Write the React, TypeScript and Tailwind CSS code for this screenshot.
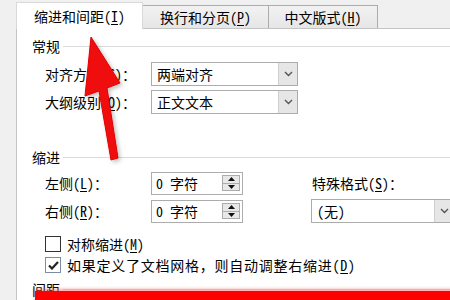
import React from "react";

function Key({ text, k }: { text: string; k: string }) {
	return (
		<span className="whitespace-nowrap">
			{text}(<span className="underline underline-offset-2">{k}</span>)
		</span>
	);
}

function Chevron() {
	return (
		<svg width="9" height="6" viewBox="0 0 9 6">
			<path d="M1 1 L4.5 4.5 L8 1" fill="none" stroke="#555" strokeWidth="1.4" />
		</svg>
	);
}

function Select({ value, className }: { value: string; className: string }) {
	return (
		<div className={"flex items-center h-[24px] border border-[#acacac] bg-white " + className}>
			<span className="flex-1 pl-[5px] leading-none">{value}</span>
			<div className="w-[19px] h-[22px] flex items-center justify-center bg-[#e6e6e6] border-l border-[#cfcfcf] shrink-0">
				<Chevron />
			</div>
		</div>
	);
}

function SpinBox({ value }: { value: string }) {
	return (
		<div className="flex items-center h-[23px] w-[92px] border border-[#acacac] bg-white">
			<span className="flex-1 pl-[4px] leading-none whitespace-pre">{value}</span>
			<div className="w-[18px] h-[16px] mr-[2px] flex flex-col border border-[#acacac] bg-[#e8e8e8]">
				<div className="flex-1 flex items-center justify-center border-b border-[#acacac]">
					<svg width="7" height="4" viewBox="0 0 7 4">
						<path d="M0 4 L3.5 0 L7 4 Z" fill="#111" />
					</svg>
				</div>
				<div className="flex-1 flex items-center justify-center">
					<svg width="7" height="4" viewBox="0 0 7 4">
						<path d="M0 0 L3.5 4 L7 0 Z" fill="#111" />
					</svg>
				</div>
			</div>
		</div>
	);
}

function Group({ title, className }: { title: string; className: string }) {
	return (
		<div className={"flex items-center h-[18px] " + className}>
			<span className="leading-none">{title}</span>
			<div className="flex-1 h-px bg-[#dcdcdc] ml-[3px]" />
		</div>
	);
}

function Check({ checked, children }: { checked?: boolean; children: React.ReactNode }) {
	return (
		<div className="flex items-center h-[16px] pl-[13px] gap-[6px]">
			<div className={"w-[16px] h-[16px] bg-white border flex items-center justify-center " + (checked ? "border-[#7a8ca8]" : "border-[#333]")}>
				{checked && (
					<svg width="11" height="9" viewBox="0 0 11 9">
						<path d="M1 4.5 L4 7.5 L10 1" fill="none" stroke="#222" strokeWidth="2.2" />
					</svg>
				)}
			</div>
			<span className="leading-none whitespace-nowrap">{children}</span>
		</div>
	);
}

export default function App() {
	return (
		<div className="relative w-[450px] h-[300px] overflow-hidden bg-[#f0f0f0] flex text-[14px] text-black font-['Noto_Sans_Mono_CJK_SC','Noto_Sans_CJK_SC',monospace]">
			<div className="w-[16px] shrink-0" />
			<div className="flex-1 flex flex-col">
				{/* tabs */}
				<div className="h-[28px] flex items-end shrink-0">
					<div className="relative z-10 w-[127px] h-[27px] -mb-px bg-white border-t border-l border-r border-[#d9d9d9] flex items-center justify-center">
						<Key text="缩进和间距" k="I" />
					</div>
					<div className="w-[126px] h-[23px] border-t border-r border-[#acacac] bg-gradient-to-b from-[#f2f2f2] to-[#e6e6e6] flex items-center justify-center">
						<Key text="换行和分页" k="P" />
					</div>
					<div className="w-[109px] h-[23px] border-t border-r border-[#acacac] bg-gradient-to-b from-[#f2f2f2] to-[#e6e6e6] flex items-center justify-center">
						<Key text="中文版式" k="H" />
					</div>
				</div>

				{/* panel */}
				<div className="flex-1 bg-white border-l border-t border-[#c4c4c4] pl-[15px] flex flex-col">
					<Group title="常规" className="mt-[8px]" />
					<div className="pl-[13px] flex flex-col">
						<div className="flex items-center mt-[7px]">
							<span className="w-[106px]"><Key text="对齐方式" k="G" />：</span>
							<Select value="两端对齐" className="w-[147px]" />
						</div>
						<div className="flex items-center mt-[4px]">
							<span className="w-[106px]"><Key text="大纲级别" k="O" />：</span>
							<Select value="正文文本" className="w-[147px]" />
						</div>
					</div>

					<Group title="缩进" className="mt-[34px]" />
					<div className="pl-[13px] mt-[5px] grid grid-cols-[106px_92px_70px_1fr] grid-rows-[24px_24px] gap-y-[4px] items-center">
						<span><Key text="左侧" k="L" />：</span>
						<SpinBox value="0 字符" />
						<span />
						<span className="-ml-[1px]"><Key text="特殊格式" k="S" />：</span>
						<span><Key text="右侧" k="R" />：</span>
						<SpinBox value="0 字符" />
						<span />
						<Select value="(无)" className="w-[143px] -ml-[2px]" />
					</div>

					<div className="mt-[13px]">
						<Check>
							<Key text="对称缩进" k="M" />
						</Check>
					</div>
					<div className="mt-[5px]">
						<Check checked>
							<span className="tracking-[0.75px]">
								如果定义了文档网格，则自动调整右缩进(<span className="underline underline-offset-2">D</span>)
							</span>
						</Check>
					</div>
					<Group title="间距" className="mt-[7px]" />
				</div>
			</div>

			{/* annotation: red box edge */}
			<div className="absolute left-[35px] top-[291px] w-[420px] h-[12px] bg-[#ff0000] shadow-[0_-2px_3px_rgba(255,80,80,0.5)]" />

			{/* annotation: red arrow */}
			<svg className="absolute left-0 top-0 pointer-events-none" width="450" height="300" viewBox="0 0 450 300">
				<defs>
					<filter id="soft" x="-30%" y="-30%" width="160%" height="160%">
						<feGaussianBlur in="SourceAlpha" stdDeviation="2" />
						<feOffset dx="2" dy="2" result="b" />
						<feFlood floodColor="#000" floodOpacity="0.25" />
						<feComposite in2="b" operator="in" />
						<feMerge>
							<feMergeNode />
							<feMergeNode in="SourceGraphic" />
						</feMerge>
					</filter>
				</defs>
				<path
					d="M91 37 L120 83 L107 88 L118 158 L111 160 L99 91 L85 96 Z"
					fill="#f01010"
					stroke="#e00000"
					strokeWidth="1"
					strokeLinejoin="round"
					filter="url(#soft)"
				/>
			</svg>
		</div>
	);
}
